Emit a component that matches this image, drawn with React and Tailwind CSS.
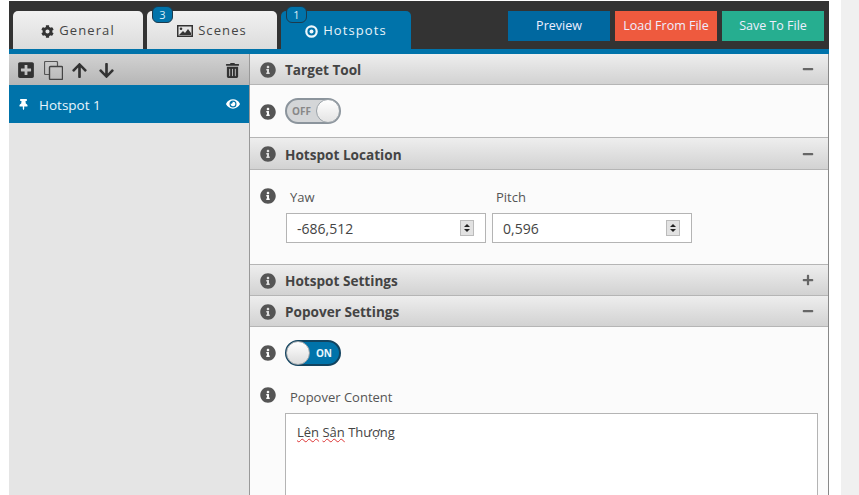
import React from "react";
import { FaCog, FaPlusSquare, FaArrowUp, FaArrowDown, FaTrashAlt, FaThumbtack, FaEye, FaInfoCircle, FaMinus, FaPlus } from "react-icons/fa";

const font = { fontFamily: '"Open Sans", sans-serif' };

function Tab({ icon, label, active, badge, className }) {
  return (
    <div className={`relative h-[38px] flex items-center justify-center gap-[5px] pt-[2px] rounded-t-[5px] text-[13px] tracking-[1.1px] ${active ? "bg-[#0073aa] text-[#e8f4fa]" : "bg-gradient-to-b from-[#f1f1f1] to-[#dcdcdc] text-[#444]"} ${className}`}>
      {icon}
      <span>{label}</span>
      {badge && (
        <span className="absolute left-[5px] top-[-5px] w-[21px] h-[17px] rounded-[6px] bg-[#0073aa] border border-[#1d3a4c] text-[#dbeef8] text-[11px] leading-[15px] text-center tracking-normal">{badge}</span>
      )}
    </div>
  );
}

function Btn({ label, className }) {
  return <div className={`h-[30px] w-[102px] flex items-center justify-center pt-[1px] text-[12.5px] text-[#eef] ${className}`}>{label}</div>;
}

function Head({ title, open, className = "h-[31px]", titleClass = "pt-[2px]" }) {
  return (
    <div className={`flex items-center shrink-0 bg-gradient-to-b from-[#eeeeee] to-[#d2d2d2] border-b border-[#b5b5b5] pl-[10px] pr-[14px] ${className}`}>
      <FaInfoCircle className="text-[#555] text-[16px] mt-[1px]" />
      <span className={`ml-[9px] text-[13.6px] font-bold text-[#444] ${titleClass}`}>{title}</span>
      <span className="ml-auto text-[#666] text-[12px]">{open ? <FaMinus /> : <FaPlus />}</span>
    </div>
  );
}

function Spin({ value, className }) {
  return (
    <div className={`h-[30px] bg-white border border-[#b4b4b4] flex items-center pl-[10px] pr-[11px] text-[14px] text-[#444] ${className}`}>
      <span className="pt-[1px]">{value}</span>
      <span className="ml-auto w-[14px] h-[16px] bg-[#e2e2e2] border border-[#bbb] flex flex-col items-center justify-center gap-[2px]">
        <span className="w-0 h-0 border-x-[3px] border-x-transparent border-b-[3px] border-b-[#222]" />
        <span className="w-0 h-0 border-x-[3px] border-x-transparent border-t-[3px] border-t-[#222]" />
      </span>
    </div>
  );
}

function ImageIcon() {
  return (
    <svg width="16" height="12" viewBox="0 0 16 12" className="shrink-0">
      <rect x="0.75" y="0.75" width="14.5" height="10.5" fill="#e4e4e4" stroke="#333" strokeWidth="1.5" />
      <circle cx="4" cy="3.8" r="1.3" fill="#333" />
      <path d="M2 10 L6 6 L8 8 L11 4 L14 8 V10 Z" fill="#333" />
    </svg>
  );
}

function RingIcon() {
  return (
    <svg width="13" height="13" viewBox="0 0 13 13" className="shrink-0">
      <circle cx="6.5" cy="6.5" r="5.2" fill="none" stroke="#eef7fc" strokeWidth="2.2" />
      <circle cx="6.5" cy="6.5" r="2" fill="#eef7fc" />
    </svg>
  );
}

function CopyIcon() {
  return (
    <svg width="19" height="19" viewBox="0 0 19 19" className="ml-[9px] shrink-0">
      <path d="M5 13.5 H1.5 a1 1 0 0 1 -1 -1 V1.5 a1 1 0 0 1 1 -1 H12.5 a1 1 0 0 1 1 1 V5" fill="none" stroke="#555" strokeWidth="1.2" />
      <rect x="5.5" y="5.5" width="13" height="13" rx="1" fill="none" stroke="#444" strokeWidth="1.4" />
    </svg>
  );
}

export default function App() {
  return (
    <div style={font} className="relative h-[495px] w-[859px] overflow-hidden bg-white flex">
      <div className="w-[820px] ml-[9px] mt-[1px] shrink-0 flex flex-col">
        <div className="h-[48px] shrink-0 bg-[#333333] flex items-start pt-[10px] pl-[4px] pr-[5px]">
          <Tab icon={<FaCog className="text-[13px] text-[#333]" />} label="General" className="w-[130px]" />
          <Tab icon={<ImageIcon />} label="Scenes" badge="3" className="w-[130px] ml-[4px]" />
          <Tab icon={<RingIcon />} label="Hotspots" active badge="1" className="w-[130px] ml-[4px]" />
          <div className="ml-auto flex gap-[5px]">
            <Btn label="Preview" className="bg-[#0068a0]" />
            <Btn label="Load From File" className="bg-[#ee5a3e]" />
            <Btn label="Save To File" className="bg-[#26ae90]" />
          </div>
        </div>
        <div className="h-[5px] shrink-0 bg-[#0073aa]" />
        <div className="flex flex-1 min-h-0">
          <div className="w-[241px] shrink-0 bg-[#e5e5e5] border-r border-[#999]">
            <div className="h-[31px] bg-gradient-to-b from-[#d2d2d2] to-[#b6b6b6] flex items-center pl-[8px] pr-[9px] pt-[1px] text-[#333] text-[18px]">
              <FaPlusSquare />
              <CopyIcon />
              <FaArrowUp className="ml-[8px] text-[17px]" />
              <FaArrowDown className="ml-[10px] text-[17px]" />
              <FaTrashAlt className="ml-auto text-[15px]" />
            </div>
            <div className="h-[38px] bg-[#0073aa] flex items-center pl-[9px] pr-[9px] text-[#e8f6fd] text-[13.5px]">
              <FaThumbtack className="text-[11px] text-white mt-[1px]" />
              <span className="ml-[10px] pt-[2px]">Hotspot 1</span>
              <FaEye className="ml-auto text-[14px] text-white" />
            </div>
          </div>
          <div className="flex-1 min-w-0 bg-[#fbfbfb] border-r border-[#888] flex flex-col">
            <Head title="Target Tool" open />
            <div className="h-[53px] shrink-0 flex items-start pl-[10px] pt-[13px] border-b border-[#b5b5b5]">
              <FaInfoCircle className="text-[#555] text-[16px] mt-[6px]" />
              <div className="ml-[9px] w-[56px] h-[26px] rounded-full bg-[#d4d6d8] border-2 border-[#8b949c] relative">
                <span className="absolute left-[5px] top-[3px] text-[10px] leading-[16px] font-bold text-[#888]">OFF</span>
                <span className="absolute right-[-1px] top-[-1px] w-[24px] h-[24px] rounded-full bg-gradient-to-b from-white to-[#e4e4e4] border border-[#9aa2a8]" />
              </div>
            </div>
            <Head title="Hotspot Location" open className="h-[32px]" titleClass="pt-[3px]" />
            <div className="h-[95px] shrink-0 border-b border-[#b5b5b5] flex items-start pl-[10px] pt-[18px]">
              <FaInfoCircle className="text-[#555] text-[16px]" />
              <div className="ml-[10px] flex gap-[6px]">
                <div className="flex flex-col">
                  <span className="pl-[4px] text-[13px] leading-[18px] text-[#555] mb-[7px]">Yaw</span>
                  <Spin value="-686,512" className="w-[200px]" />
                </div>
                <div className="flex flex-col">
                  <span className="pl-[4px] text-[13px] leading-[18px] text-[#555] mb-[7px]">Pitch</span>
                  <Spin value="0,596" className="w-[200px]" />
                </div>
              </div>
            </div>
            <Head title="Hotspot Settings" />
            <Head title="Popover Settings" open />
            <div className="flex-1 min-h-0 flex flex-col pl-[10px] pr-[10px]">
              <div className="flex items-start pt-[13px]">
                <FaInfoCircle className="text-[#555] text-[16px] mt-[5px]" />
                <div className="ml-[9px] w-[56px] h-[26px] rounded-full bg-[#0073aa] border-2 border-[#12435f] relative">
                  <span className="absolute right-[7px] top-[3px] text-[10px] leading-[16px] font-bold text-[#e8f6fd]">ON</span>
                  <span className="absolute left-[-1px] top-[-1px] w-[24px] h-[24px] rounded-full bg-gradient-to-b from-white to-[#dcdcdc] border border-[#9aa2a8]" />
                </div>
              </div>
              <div className="flex items-start mt-[21px]">
                <FaInfoCircle className="text-[#555] text-[16px]" />
                <span className="ml-[14px] mt-[1px] text-[13px] leading-[18px] text-[#555]">Popover Content</span>
              </div>
              <div className="ml-[25px] mt-[7px] flex-1 bg-white border border-[#b4b4b4] border-b-0 pl-[11px] pt-[8px] text-[13px] leading-[20px] text-[#444]">
                <span className="underline decoration-wavy decoration-[#d33] decoration-[1px]">Lên</span> <span className="underline decoration-wavy decoration-[#d33] decoration-[1px]">Sân</span> Thượng
              </div>
            </div>
          </div>
        </div>
      </div>
      <div className="ml-[12px] flex-1 bg-[#f0f0f0]" />
    </div>
  );
}
